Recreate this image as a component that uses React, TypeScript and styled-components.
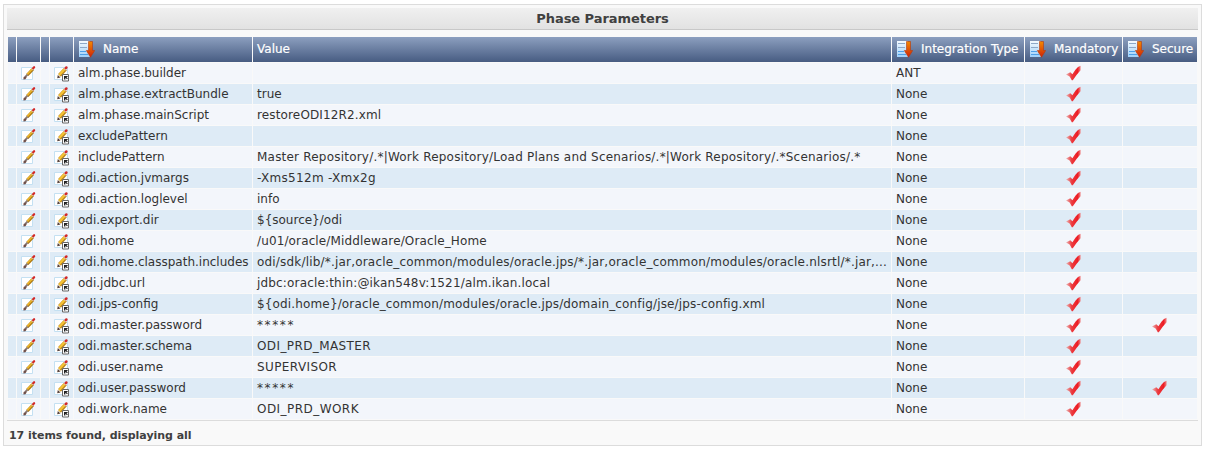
import React from 'react';
import styled, { createGlobalStyle } from 'styled-components';

const GlobalStyle = createGlobalStyle`
  body { margin: 0; background: #fff; }
`;

const Panel = styled.section`
  box-sizing: border-box;
  width: 1199px;
  height: 442px;
  margin: 4px 0 0 3px;
  padding: 3px;
  border: 1px solid #dcdcdc;
  background: #f9f9f9;
  color: #333;
  font-family: 'DejaVu Sans', sans-serif;
  font-size: 12px;
`;

const Title = styled.h1`
  box-sizing: border-box;
  height: 22px;
  margin: 0 0 6px;
  border-bottom: 1px solid #c8c8c8;
  background: linear-gradient(#f0f0f0, #e2e2e2);
  color: #404040;
  font: bold 13px/21px 'DejaVu Sans', sans-serif;
  letter-spacing: -0.05px;
  text-align: center;
`;

const Table = styled.table`
  width: 1191px;
  table-layout: fixed;
  border-collapse: separate;
  border-spacing: 1px;
`;

const Col = styled.col<{ $width: number }>`
  width: ${(p) => p.$width}px;
`;

const HeadRow = styled.tr`
  background: linear-gradient(#8c9fbf, #475c82);
`;

const HeadCell = styled.th`
  height: 25px;
  padding: 0 0 0 4px;
  color: #fff;
  font-weight: normal;
  -webkit-text-stroke: 0.2px #fff;
  line-height: 23px;
  text-align: left;
  white-space: nowrap;
`;

const HeadLabel = styled.span`
  display: flex;
  align-items: center;
  height: 25px;
  padding-bottom: 1px;
  box-sizing: border-box;
`;

const Row = styled.tr`
  background: #f3f6fb;
  &:nth-child(even) { background: #deebf6; }
`;

const Cell = styled.td<{ $center?: boolean }>`
  height: 20px;
  padding: 0 0 0 ${(p) => (p.$center ? 0 : 4)}px;
  line-height: 20px;
  white-space: nowrap;
  overflow: hidden;
  text-align: ${(p) => (p.$center ? 'center' : 'left')};
`;

const Text = styled.span<{ $tracking?: number }>`
  display: block;
  height: 20px;
  line-height: 20px;
  letter-spacing: ${(p) => p.$tracking ?? 0}px;
`;

const Icon = styled.svg`
  display: block;
  flex: none;
`;

const SortGlyph = styled(Icon)`
  margin-right: 8px;
`;

const CheckGlyph = styled(Icon)`
  margin: 2px auto;
`;

const Footer = styled.footer`
  border-top: 1px solid #dcdcdc;
  padding-left: 2px;
  font: bold 11px/29px 'DejaVu Sans', sans-serif;
  letter-spacing: -0.04px;
  color: #404040;
`;

const SortIcon = () => (
  <SortGlyph width="17" height="18" viewBox="0 0 17 18">
    <defs>
      <linearGradient id="page" x2="0" y2="1">
        <stop stopColor="#f4faff" />
        <stop offset="1" stopColor="#9ed0fa" />
      </linearGradient>
      <linearGradient id="arrow" x2="0" y2="1">
        <stop stopColor="#f28a00" />
        <stop offset="1" stopColor="#cf2008" />
      </linearGradient>
    </defs>
    <path d="M1 1h11v16H1z" fill="url(#page)" />
    <path d="M2 3.5h7M2 7.5h7" stroke="#8fa9c8" />
    <path d="M2 11.5h6M2 14.5h8" stroke="#4f9fe6" />
    <path d="M10.5 1.5h4v9h2.2L12.5 17.3 8.3 10.5h2.2z" fill="url(#arrow)" stroke="#b43a10" strokeWidth=".6" />
  </SortGlyph>
);

const EditIcon = () => (
  <Icon width="19" height="20" viewBox="0 0 19 20">
    <path d="M.5 4.5h11v12H.5z" fill="#fff" stroke="#c4e0f2" />
    <path d="M6.3 12 12 6" stroke="#a87512" strokeWidth="3" />
    <path d="M6 11.6 11.5 5.7" stroke="#edb62a" strokeWidth="1.6" />
    <path d="m11 6.6 1.3-1.4" stroke="#dcc7a8" strokeWidth="2.6" />
    <path d="m12.2 5.2.9-.9" stroke="#d32828" strokeWidth="2.3" strokeLinecap="round" />
    <path d="m4.2 14 2.4-2.4" stroke="#887873" strokeWidth="2" />
    <path d="m2.4 16.5.2-2.4 1.6-.9 1.4 1.3-1.1 1.8z" fill="#70504a" />
  </Icon>
);

const OverrideIcon = () => (
  <Icon width="19" height="20" viewBox="0 0 19 20">
    <path d="M.5 4.5h13v12H.5z" fill="#fff" stroke="#c4e0f2" />
    <path d="m5.5 12.4 6-6.4" stroke="#b98218" strokeWidth="3.8" />
    <path d="m5.2 12 5.8-6.2" stroke="#f6c335" strokeWidth="2.2" />
    <path d="m10.7 6.5 1-1.1" stroke="#e6e0d8" strokeWidth="3" />
    <path d="m11.7 5.2.7-.7" stroke="#d32828" strokeWidth="2.5" strokeLinecap="round" />
    <path d="m3.2 15.2.6-3.2 2.7 2.4z" fill="#554039" />
    <path d="M8.5 11.5h6v6.5h-6z" fill="#fff" stroke="#666" />
    <path d="M10 13h3.6v1h-1.2l1.4 1.5-.8.8-1.6-1.5v1.6H10z" fill="#222" />
  </Icon>
);

const CheckIcon = () => (
  <CheckGlyph width="16" height="16" viewBox="0 0 16 16">
    <defs>
      <linearGradient id="tick">
        <stop stopColor="#eab5b5" />
        <stop offset=".4" stopColor="#ec3a3e" />
        <stop offset=".8" stopColor="#ed1c24" />
        <stop offset="1" stopColor="#e88" />
      </linearGradient>
    </defs>
    <path d="M0 9.4 4.3 7.3 6.4 9.3 9.6 4.6 12 2l2.6-1.2v4.4L10.5 10 6.8 15.2H5.8L3.6 11.6z" fill="url(#tick)" />
  </CheckGlyph>
);

interface Parameter {
  name: string;
  value: string;
  tracking?: number;
  type?: string;
  secure?: boolean;
}

const parameters: Parameter[] = [
  { name: 'alm.phase.builder', value: '', type: 'ANT' },
  { name: 'alm.phase.extractBundle', value: 'true' },
  { name: 'alm.phase.mainScript', value: 'restoreODI12R2.xml', tracking: 0.14 },
  { name: 'excludePattern', value: '' },
  { name: 'includePattern', value: 'Master Repository/.*|Work Repository/Load Plans and Scenarios/.*|Work Repository/.*Scenarios/.*', tracking: 0.21 },
  { name: 'odi.action.jvmargs', value: '-Xms512m -Xmx2g', tracking: 0.3 },
  { name: 'odi.action.loglevel', value: 'info' },
  { name: 'odi.export.dir', value: '${source}/odi' },
  { name: 'odi.home', value: '/u01/oracle/Middleware/Oracle_Home', tracking: 0.13 },
  { name: 'odi.home.classpath.includes', value: 'odi/sdk/lib/*.jar,oracle_common/modules/oracle.jps/*.jar,oracle_common/modules/oracle.nlsrtl/*.jar,...', tracking: 0.19 },
  { name: 'odi.jdbc.url', value: 'jdbc:oracle:thin:@ikan548v:1521/alm.ikan.local', tracking: 0.17 },
  { name: 'odi.jps-config', value: '${odi.home}/oracle_common/modules/oracle.jps/domain_config/jse/jps-config.xml', tracking: 0.15 },
  { name: 'odi.master.password', value: '*****', tracking: 1.6, secure: true },
  { name: 'odi.master.schema', value: 'ODI_PRD_MASTER', tracking: 0.4 },
  { name: 'odi.user.name', value: 'SUPERVISOR', tracking: 0.4 },
  { name: 'odi.user.password', value: '*****', tracking: 1.6, secure: true },
  { name: 'odi.work.name', value: 'ODI_PRD_WORK', tracking: 0.45 },
];

const widths = [8, 23, 8, 23, 178, 638, 132, 97, 74];

const SortHeader = ({ children }: { children: React.ReactNode }) => (
  <HeadCell>
    <HeadLabel><SortIcon />{children}</HeadLabel>
  </HeadCell>
);

export default function App() {
  return (
    <>
      <GlobalStyle />
      <Panel>
        <Title>Phase Parameters</Title>
        <Table>
          <colgroup>{widths.map((w, i) => <Col key={i} $width={w} />)}</colgroup>
          <thead>
            <HeadRow>
              <HeadCell /><HeadCell /><HeadCell /><HeadCell />
              <SortHeader>Name</SortHeader>
              <HeadCell>Value</HeadCell>
              <SortHeader>Integration Type</SortHeader>
              <SortHeader>Mandatory</SortHeader>
              <SortHeader>Secure</SortHeader>
            </HeadRow>
          </thead>
          <tbody>
            {parameters.map((p) => (
              <Row key={p.name}>
                <Cell />
                <Cell><EditIcon /></Cell>
                <Cell />
                <Cell><OverrideIcon /></Cell>
                <Cell><Text>{p.name}</Text></Cell>
                <Cell><Text $tracking={p.tracking}>{p.value}</Text></Cell>
                <Cell><Text>{p.type ?? 'None'}</Text></Cell>
                <Cell $center><CheckIcon /></Cell>
                <Cell $center>{p.secure && <CheckIcon />}</Cell>
              </Row>
            ))}
          </tbody>
        </Table>
        <Footer>17 items found, displaying all</Footer>
      </Panel>
    </>
  );
}
